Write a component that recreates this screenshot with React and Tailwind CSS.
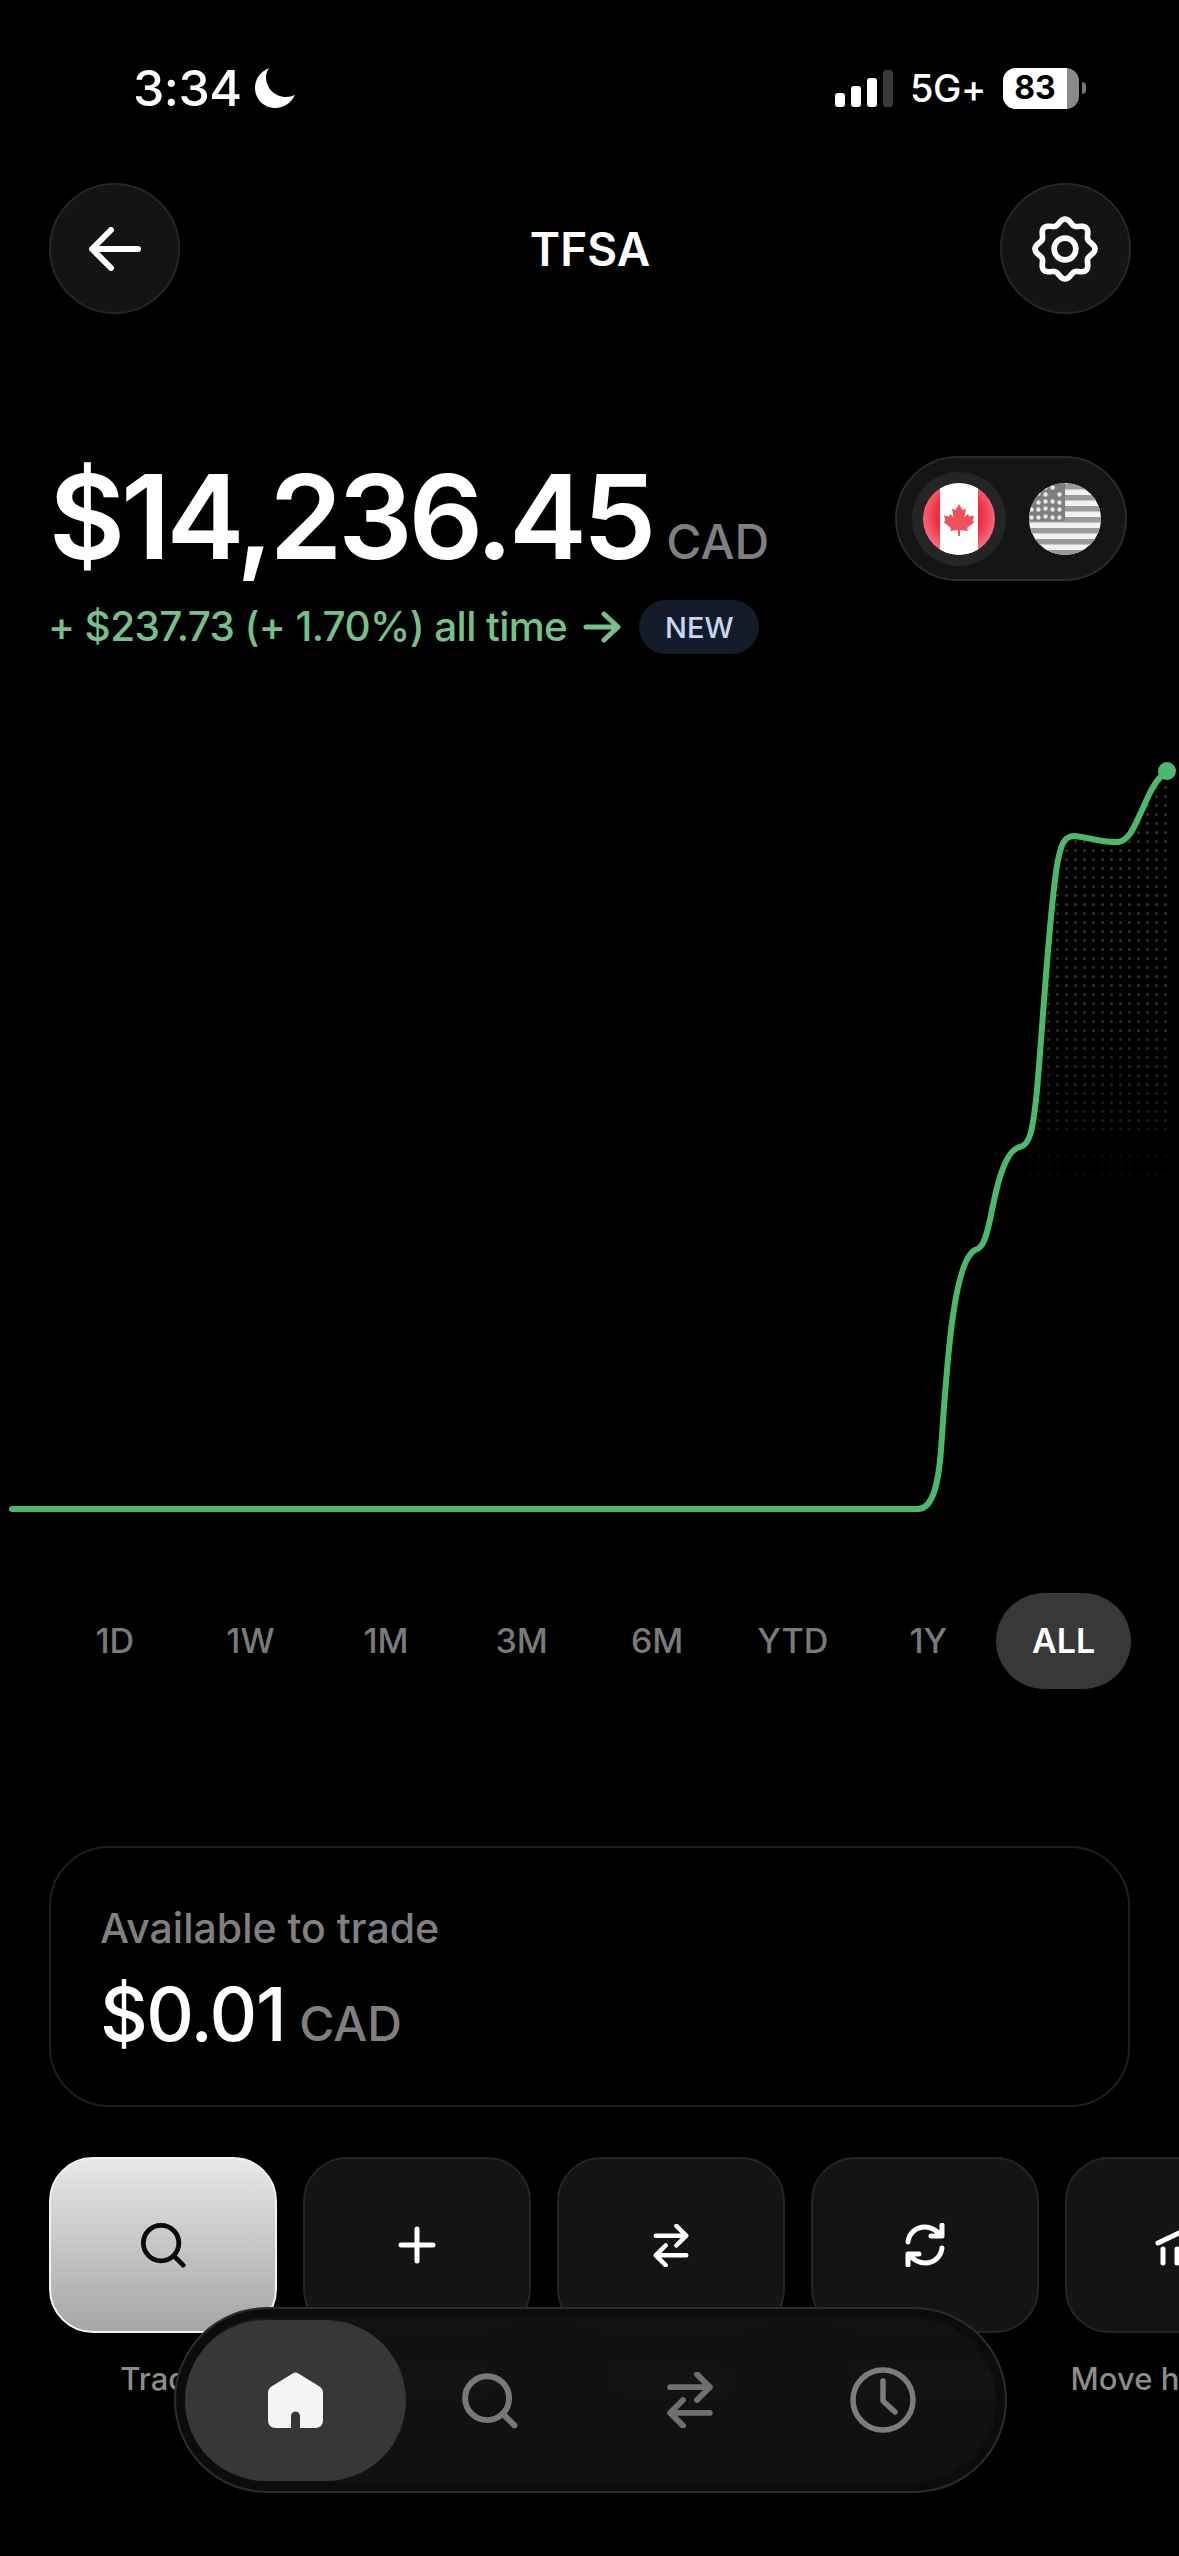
import React from "react";

const gearPath = (() => {
  const pts = [];
  for (let i = 0; i < 96; i++) {
    const t = (i / 96) * Math.PI * 2;
    const r = 26.5 + 2.6 * Math.cos(8 * t);
    pts.push(`${(32 + r * Math.sin(t)).toFixed(2)} ${(32 - r * Math.cos(t)).toFixed(2)}`);
  }
  return "M" + pts.join("L") + "Z";
})();

const linePath =
  "M12 1509 H918 C931 1509 938 1490 941 1450 C946 1380 952 1262 975 1250 C982 1248 985 1242 990 1220 C995 1195 1003 1150 1020 1147 C1030 1145 1033 1130 1037 1090 C1044 1010 1050 900 1058 860 C1062 840 1066 836 1075 836 C1090 838 1105 843 1118 842 C1130 840 1135 825 1142 810 C1150 792 1155 780 1167 771";

const ranges = ["1D", "1W", "1M", "3M", "6M", "YTD", "1Y"];

function SearchIcon({ size, color, width }) {
  return (
    <svg width={size} height={size} viewBox="0 0 48 48" fill="none" stroke={color} strokeWidth={width} strokeLinecap="round">
      <circle cx="22" cy="22" r="18.5" />
      <path d="M35.5 35.5 L45 45" />
    </svg>
  );
}

function SwapIcon({ w, h, color, width }) {
  return (
    <svg width={w} height={h} viewBox="0 0 40 48" fill="none" stroke={color} strokeWidth={width} strokeLinecap="round" strokeLinejoin="round">
      <path d="M3 13 H37 M26 2 L37 13 L26 24" />
      <path d="M37 35 H3 M14 24 L3 35 L14 46" />
    </svg>
  );
}

function Tile({ children, label, active }) {
  return (
    <div className="flex w-[228px] shrink-0 flex-col items-center">
      <div
        className={
          active
            ? "flex h-[176px] w-[228px] items-center justify-center rounded-[44px] border-2 border-[#f2f2f2] bg-gradient-to-b from-[#e8e8e8] to-[#a6a6a6]"
            : "flex h-[176px] w-[228px] items-center justify-center rounded-[44px] border-2 border-[#242424] bg-[#141414]"
        }
      >
        {children}
      </div>
      <span className="mt-[27px] whitespace-nowrap text-[31px] font-medium leading-[38px] text-[#8c8c8c]">{label}</span>
    </div>
  );
}

export default function App() {
  return (
    <div className="relative h-[2556px] w-[1179px] overflow-hidden bg-black font-['Inter',sans-serif] text-white">
      {/* status bar */}
      <div className="mt-[64px] flex h-[48px] items-center justify-between pl-[133px] pr-[93px]">
        <div className="flex items-center gap-[12px]">
          <span className="text-[50px] font-medium leading-none tracking-[-0.01em]">3:34</span>
          <svg width="42" height="40" viewBox="0 0 42 40" fill="white">
            <path d="M15 0 C6 4 1 11 1 20 C1 31 10 40 21 40 C30 40 37 35 41 27 C38 28 35 29 32 29 C21 29 12 20 12 9 C12 6 13 3 15 0 Z" />
          </svg>
        </div>
        <div className="flex items-center">
          <div className="flex h-[38px] items-end gap-[6px]">
            <div className="h-[14px] w-[10px] rounded-[3px] bg-white" />
            <div className="h-[21px] w-[10px] rounded-[3px] bg-white" />
            <div className="h-[29px] w-[10px] rounded-[3px] bg-white" />
            <div className="h-[37px] w-[10px] rounded-[3px] bg-[#3a3a3a]" />
          </div>
          <span className="ml-[17px] text-[38px] font-medium leading-none tracking-[-0.01em]">5G+</span>
          <div className="ml-[17px] flex h-[41px] w-[76px] overflow-hidden rounded-[13px] bg-[#8a8a8a]">
            <div className="flex h-full w-[64px] items-center justify-center bg-white text-[32px] font-bold leading-none text-black">83</div>
          </div>
          <div className="ml-[3px] h-[12px] w-[4px] rounded-r-full bg-[#777]" />
        </div>
      </div>

      {/* header */}
      <div className="mt-[71px] flex items-center justify-between pl-[49px] pr-[48px]">
        <div className="flex h-[131px] w-[131px] items-center justify-center rounded-full border-2 border-[#262626] bg-[#141414]">
          <svg width="52" height="44" viewBox="0 0 52 44" fill="none" stroke="white" strokeWidth="6" strokeLinecap="round" strokeLinejoin="round">
            <path d="M49 22 H4 M22 3 L3 22 L22 41" />
          </svg>
        </div>
        <span className="text-[46px] font-semibold leading-none">TFSA</span>
        <div className="flex h-[131px] w-[131px] items-center justify-center rounded-full border-2 border-[#262626] bg-[#141414]">
          <svg width="66" height="66" viewBox="0 0 64 64" fill="none" stroke="white" strokeWidth="5.5" strokeLinejoin="round">
            <path d={gearPath} />
            <circle cx="32" cy="32" r="10.5" />
          </svg>
        </div>
      </div>

      {/* balance */}
      <div className="mt-[145px] flex items-start justify-between pl-[49px] pr-[52px]">
        <div>
          <div className="flex h-[116px] items-baseline">
            <span className="text-[117px] font-semibold leading-[116px] tracking-[-0.035em]">$14,236.45</span>
            <span className="ml-[14px] text-[48px] font-medium leading-none text-[#7f7f7f]">CAD</span>
          </div>
          <div className="mt-[25px] flex h-[54px] items-center">
            <span className="ml-[-1px] text-[40.5px] font-medium leading-none tracking-[-0.015em] text-[#78c08a]">+ $237.73 (+ 1.70%) all time</span>
            <svg className="ml-[16px]" width="38" height="32" viewBox="0 0 38 32" fill="none" stroke="#78c08a" strokeWidth="5" strokeLinecap="round" strokeLinejoin="round">
              <path d="M3 16 H34 M21 3 L35 16 L21 29" />
            </svg>
            <span className="ml-[18px] flex h-[54px] w-[120px] items-center justify-center rounded-full bg-[#141c2c] text-[29px] font-medium leading-none text-[#c9d6f2]">NEW</span>
          </div>
        </div>
        <div className="mt-[-3px] flex h-[125px] w-[232px] shrink-0 items-center rounded-full border-2 border-[#2a2a2a] bg-[#151515] pl-[15px]">
          <div className="flex h-[94px] w-[94px] items-center justify-center rounded-full bg-[#242626]">
            <svg width="72" height="72" viewBox="0 0 72 72">
              <defs>
                <clipPath id="ca"><circle cx="36" cy="36" r="36" /></clipPath>
                <radialGradient id="gloss" cx="50%" cy="45%" r="55%">
                  <stop offset="0.55" stopColor="#ffffff" stopOpacity="0" />
                  <stop offset="1" stopColor="#ffffff" stopOpacity="0.35" />
                </radialGradient>
              </defs>
              <g clipPath="url(#ca)">
                <rect width="72" height="72" fill="#ef2b3f" />
                <rect x="17" width="38" height="72" fill="#ffffff" />
                <path
                  fill="#f0505f"
                  d="M36 21 L39.5 27 L43 25.5 L41.5 34 L45 31 L46 33.5 L51 32.5 L49.5 38 L51.5 39 L44 45 L45 48 L37 47 L37 53 L35 53 L35 47 L27 48 L28 45 L20.5 39 L22.5 38 L21 32.5 L26 33.5 L27 31 L30.5 34 L29 25.5 L32.5 27 Z"
                />
                <circle cx="36" cy="36" r="36" fill="url(#gloss)" />
              </g>
            </svg>
          </div>
          <div className="ml-[23px] flex h-[72px] w-[72px] items-center justify-center">
            <svg width="72" height="72" viewBox="0 0 72 72">
              <defs>
                <clipPath id="us"><circle cx="36" cy="36" r="36" /></clipPath>
              </defs>
              <g clipPath="url(#us)">
                <rect width="72" height="72" fill="#f2f2f2" />
                {[0, 11, 22, 33, 44, 55, 66].map((y) => (
                  <rect key={y} y={y + 1} width="72" height="5.5" fill="#9a9a9a" />
                ))}
                <rect width="36" height="38" fill="#7e7e7e" />
                {[
                  [15, 3], [22, 3], [8, 9], [15, 10], [29, 10], [8, 18], [15, 17], [22, 17], [29, 18],
                  [1, 25], [8, 25], [15, 24], [22, 25], [29, 25], [1, 33], [8, 33], [15, 32], [22, 33], [29, 33],
                ].map(([x, y]) => (
                  <circle key={`${x}-${y}`} cx={x + 1.5} cy={y + 1.5} r="2.2" fill="#e8e8e8" />
                ))}
              </g>
            </svg>
          </div>
        </div>
      </div>

      {/* chart */}
      <svg className="mt-[101px] block" width="1179" height="770" viewBox="0 755 1179 770" fill="none">
        <defs>
          <pattern id="dots" x="0" y="0" width="9" height="9" patternUnits="userSpaceOnUse">
            <circle cx="4.5" cy="4.5" r="1.5" fill="#343434" />
          </pattern>
          <linearGradient id="fade" x1="0" y1="780" x2="0" y2="1190" gradientUnits="userSpaceOnUse">
            <stop offset="0" stopColor="white" stopOpacity="1" />
            <stop offset="0.55" stopColor="white" stopOpacity="0.9" />
            <stop offset="1" stopColor="white" stopOpacity="0.35" />
          </linearGradient>
          <mask id="fadeMask" maskUnits="userSpaceOnUse" x="1000" y="760" width="179" height="440">
            <rect x="1000" y="760" width="179" height="440" fill="url(#fade)" />
          </mask>
        </defs>
        <g mask="url(#fadeMask)">
          <path
            fill="url(#dots)"
            d="M1037 1130 L1044 1010 L1052 900 L1058 860 C1062 840 1066 836 1075 836 C1090 838 1105 843 1118 842 C1130 840 1135 825 1142 810 C1150 792 1155 780 1167 771 V1130 Z"
          />
          <rect x="1026" y="1152" width="141" height="34" fill="url(#dots)" opacity="0.45" />
        </g>
        <path d={linePath} stroke="#4cb86b" strokeWidth="6" strokeLinecap="round" strokeLinejoin="round" />
        <circle cx="1167" cy="771" r="9" fill="#4cb86b" />
      </svg>

      {/* ranges */}
      <div className="mt-[68px] flex h-[96px] items-center pl-[47px] pr-[48px]">
        {ranges.map((r) => (
          <span key={r} className="flex w-[135.6px] shrink-0 justify-center text-[34px] font-medium leading-none text-[#7a7a7a]">
            {r}
          </span>
        ))}
        <span className="flex h-[96px] w-[135px] shrink-0 items-center justify-center rounded-full bg-[#383838] text-[34px] font-semibold leading-none text-white">
          ALL
        </span>
      </div>

      {/* available */}
      <div className="mx-[49px] mt-[157px] flex h-[261px] flex-col rounded-[60px] border-2 border-[#1f1f1f] pl-[49px] pt-[56px]">
        <span className="text-[41px] font-medium leading-[48px] text-[#808080]">Available to trade</span>
        <div className="mt-[20px] flex items-baseline">
          <span className="text-[74px] font-medium leading-[84px] tracking-[-0.02em]">$0.01</span>
          <span className="ml-[14px] text-[48px] font-medium leading-none text-[#7f7f7f]">CAD</span>
        </div>
      </div>

      {/* actions */}
      <div className="mt-[50px] flex gap-[26px] pl-[49px]">
        <Tile label="Trade" active>
          <SearchIcon size={46} color="#0a0a0a" width={5} />
        </Tile>
        <Tile label="Add funds">
          <svg width="38" height="38" viewBox="0 0 38 38" stroke="white" strokeWidth="5" strokeLinecap="round">
            <path d="M19 3 V35 M3 19 H35" />
          </svg>
        </Tile>
        <Tile label="Transfer">
          <SwapIcon w={36} h={43} color="white" width={5} />
        </Tile>
        <Tile label="Exchange">
          <svg width="44" height="44" viewBox="0 0 44 44" fill="none" stroke="white" strokeWidth="5" strokeLinecap="round" strokeLinejoin="round">
            <path d="M5 19 C6 10 13 4 22 4 C28 4 33 7 38 12 M39 2 V13 H28" />
            <path d="M39 25 C38 34 31 40 22 40 C16 40 11 37 6 32 M5 42 V31 H16" />
          </svg>
        </Tile>
        <Tile label="Move holdings">
          <svg className="mt-[6px]" width="48" height="36" viewBox="0 0 48 36" fill="none" stroke="white" strokeWidth="5" strokeLinecap="round" strokeLinejoin="round">
            <path d="M3 13 L24 3 L45 13" />
            <path d="M8 19 V33 M22 19 V33 M26 19 V33 M40 19 V33" />
          </svg>
        </Tile>
      </div>

      {/* bottom nav */}
      <div className="absolute left-[174px] top-[2307px] flex h-[186px] w-[833px] items-center rounded-full border-2 border-[#2c2c2c] bg-[#131313]/90 pl-[9px] shadow-[inset_0_0_0_9px_#0c0c0c] backdrop-blur-md">
        <div className="flex h-[161px] w-[221px] shrink-0 items-center justify-center rounded-full bg-[#373737]">
          <svg width="55" height="56" viewBox="0 0 55 56">
            <path
              fill="#f5f5f5"
              d="M25 1.2 C26.5 0.2 28.5 0.2 30 1.2 L51.5 14.5 C53.8 16 55 18.3 55 21 V48 C55 53 52 56 47 56 H32 V44 C32 38 23 38 23 44 V56 H8 C3 56 0 53 0 48 V21 C0 18.3 1.2 16 3.5 14.5 Z"
            />
          </svg>
        </div>
        <div className="ml-[55px]">
          <SearchIcon size={57} color="#787878" width={5} />
        </div>
        <div className="ml-[148px]">
          <SwapIcon w={48} h={56} color="#6f6f6f" width={5} />
        </div>
        <div className="ml-[135px]">
          <svg width="68" height="68" viewBox="0 0 68 68" fill="none" stroke="#7c7c7c" strokeWidth="5.5" strokeLinecap="round" strokeLinejoin="round">
            <circle cx="34" cy="34" r="30" />
            <path d="M34 15 V35 L46 46" />
          </svg>
        </div>
      </div>
    </div>
  );
}
